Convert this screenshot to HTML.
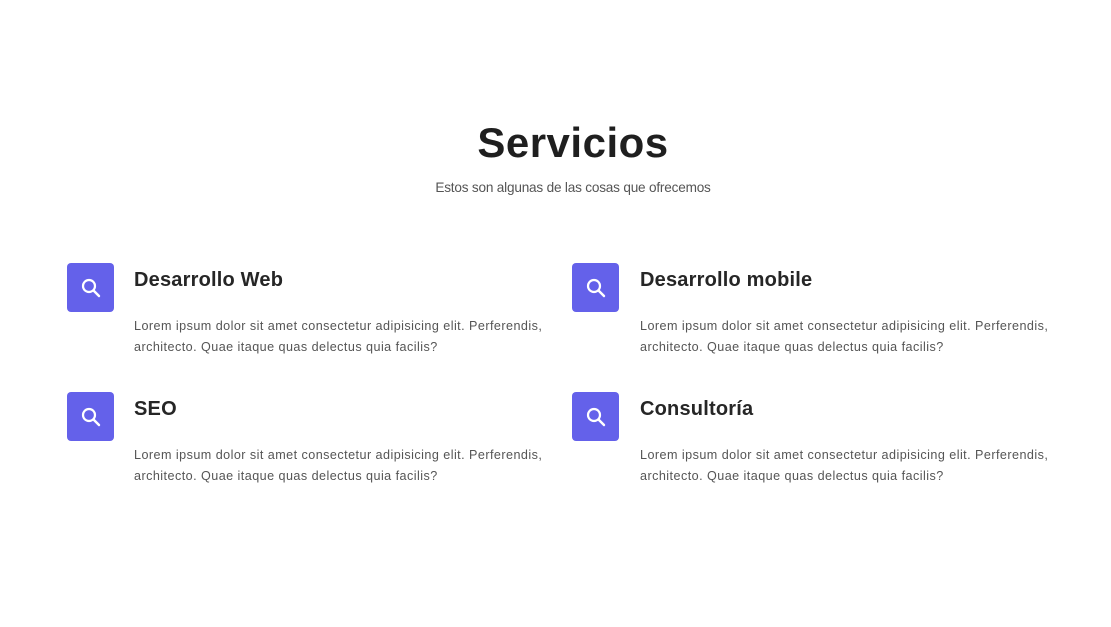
<!DOCTYPE html>
<html><head><style>
body{margin:0;width:1111px;height:627px;background:#fff;font-family:"Liberation Sans",sans-serif;position:relative;overflow:hidden}
h1{position:absolute;top:119px;left:0;width:1146px;text-align:center;margin:0;font-size:42px;font-weight:bold;color:#1f1f1f;letter-spacing:0.5px}
.sub{position:absolute;top:180px;left:0;width:1146px;text-align:center;font-size:13.6px;color:#555;letter-spacing:-0.2px}
.item{position:absolute;width:480px}
.ic{position:absolute;left:0;top:0;width:47px;height:49px;background:#6461ea;border-radius:4px}
.ic svg{position:absolute;left:13px;top:14px}
.t{position:absolute;left:67px;top:6px;font-size:20px;font-weight:bold;color:#262626;margin:0;white-space:nowrap;letter-spacing:0.2px}
.p{position:absolute;left:67px;top:53px;width:420px;font-size:12.6px;line-height:21px;color:#555;letter-spacing:0.45px;margin:0}
</style></head><body>
<h1>Servicios</h1>
<div class="sub">Estos son algunas de las cosas que ofrecemos</div>
<div class="item" style="left:67px;top:263px"><div class="ic"><svg width="22" height="22" viewBox="0 0 22 22"><circle cx="9" cy="9" r="6" fill="none" stroke="#fff" stroke-width="2.2"/><path d="M13.5 13.5L19 19" stroke="#fff" stroke-width="2.4" stroke-linecap="round"/></svg></div><h3 class="t">Desarrollo Web</h3><p class="p">Lorem ipsum dolor sit amet consectetur adipisicing elit. Perferendis,<br>architecto. Quae itaque quas delectus quia facilis?</p></div>
<div class="item" style="left:572px;top:263px"><div class="ic"><svg width="22" height="22" viewBox="0 0 22 22"><circle cx="9" cy="9" r="6" fill="none" stroke="#fff" stroke-width="2.2"/><path d="M13.5 13.5L19 19" stroke="#fff" stroke-width="2.4" stroke-linecap="round"/></svg></div><h3 class="t" style="left:68px">Desarrollo mobile</h3><p class="p" style="left:68px">Lorem ipsum dolor sit amet consectetur adipisicing elit. Perferendis,<br>architecto. Quae itaque quas delectus quia facilis?</p></div>
<div class="item" style="left:67px;top:392px"><div class="ic"><svg width="22" height="22" viewBox="0 0 22 22"><circle cx="9" cy="9" r="6" fill="none" stroke="#fff" stroke-width="2.2"/><path d="M13.5 13.5L19 19" stroke="#fff" stroke-width="2.4" stroke-linecap="round"/></svg></div><h3 class="t">SEO</h3><p class="p">Lorem ipsum dolor sit amet consectetur adipisicing elit. Perferendis,<br>architecto. Quae itaque quas delectus quia facilis?</p></div>
<div class="item" style="left:572px;top:392px"><div class="ic"><svg width="22" height="22" viewBox="0 0 22 22"><circle cx="9" cy="9" r="6" fill="none" stroke="#fff" stroke-width="2.2"/><path d="M13.5 13.5L19 19" stroke="#fff" stroke-width="2.4" stroke-linecap="round"/></svg></div><h3 class="t" style="left:68px">Consultoría</h3><p class="p" style="left:68px">Lorem ipsum dolor sit amet consectetur adipisicing elit. Perferendis,<br>architecto. Quae itaque quas delectus quia facilis?</p></div>
</body></html>
